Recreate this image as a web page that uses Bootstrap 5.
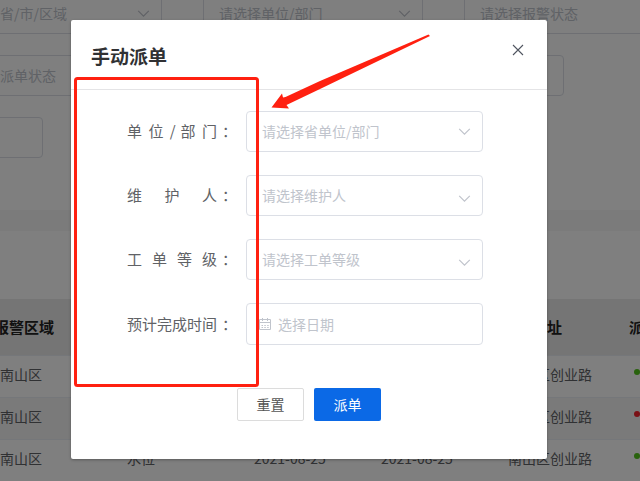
<!DOCTYPE html>
<html lang="zh-CN">
<head>
<meta charset="utf-8">
<meta name="viewport" content="width=device-width, initial-scale=1">
<title>手动派单</title>
<link href="https://cdn.jsdelivr.net/npm/bootstrap@5.3.0/dist/css/bootstrap.min.css" rel="stylesheet">
<style>
  body { font-family: "Noto Sans CJK SC", sans-serif; font-size: 14px; color: #606266; background: #f7f7f7; }
  .page { height: 100vh; }
  .scrolled { margin-left: -58px; margin-right: -60px; }
  .filters { padding-bottom: 52px; row-gap: 21px; margin-top: -7px; }
  .filter-row { column-gap: 41px; }
  .field { width: 220px; flex: none; height: 41px; border: 1px solid #dcdfe6; border-radius: 4px; font-size: 14px; padding: 0 15px; }
  .field-end { margin-left: 141px; }
  .field-short { width: 101px; }
  select.field { padding-right: 34px; color: #c0c4cc; background-color: #fff; background-size: 13px 13px; background-position: right 11px center;
    background-image: url("data:image/svg+xml,%3Csvg xmlns='http://www.w3.org/2000/svg' viewBox='0 0 13 13'%3E%3Cpath d='M1.2 3.8 6.5 9.2 11.8 3.8' fill='none' stroke='%23c0c4cc' stroke-width='1.2'/%3E%3C/svg%3E"); }
  select.field.low { background-position: right 11px top 16px; }
  .field::placeholder, .date-input::placeholder { color: #c0c4cc; opacity: 1; }
  .results { margin-top: 21px; padding-top: 68px; }
  .results table { table-layout: fixed; width: 820px; }
  .results th, .results td { padding: 0 0 3px; border-bottom: 1px solid #ebeef5; white-space: nowrap; color: #606266; vertical-align: middle; }
  .results th { height: 56px; padding-bottom: 0; font-size: 15px; background: #ebebeb; color: #222; }
  .results th span { margin-left: -6px; }
  .results td { height: 42px; background: #fff; }
  .results tr.alt td { background: #f5f5f5; }
  .lead-col { width: 58px; }
  .dot { width: 6px; height: 6px; border-radius: 50%; display: inline-block; vertical-align: 5px; margin-left: -1px; }
  .dot-green { background: #52c41a; }
  .dot-red { background: #f5222d; }
  .veil { background: rgba(0, 0, 0, .5); padding-top: 20px; }
  .dispatch { width: 476px; max-width: 100%; margin-right: 22px; border-radius: 2px; box-shadow: 0 1px 3px rgba(0, 0, 0, .3); padding-bottom: 38px; }
  .dispatch header { height: 70px; padding: 4px 20px 0; border-bottom: 1px solid #e4e4e6; }
  .dispatch h1 { font-size: 19px; color: #303133; }
  .close-btn { margin: 0 3px 18px 0; line-height: 1; }
  .entries { padding: 21px 64px 0 56px; row-gap: 23px; }
  .caption { width: 90px; flex: none; font-size: 15px; text-align: justify; text-align-last: justify; }
  .colon { width: 29px; flex: none; font-size: 15px; padding-left: 5px; }
  .entries .field { flex: 1 1 0; min-width: 0; }
  .entries .date-field { height: 42px; padding: 0 11px; gap: 6px; }
  .date-input { min-width: 0; outline: 0; }
  .actions { padding-top: 43px; gap: 10px; }
  .actions .btn { width: 67px; height: 33px; padding: 0; font-size: 14px; border-radius: 2px; }
  .btn-reset { border: 1px solid #dcdcdc; color: #555; }
  .btn-send { background: #0b69e6; color: #fff; }
  .marks { pointer-events: none; }
</style>
<script src="https://cdn.jsdelivr.net/npm/bootstrap@5.3.0/dist/js/bootstrap.bundle.min.js"></script>
</head>
<body>
<div class="page position-relative overflow-hidden">
  <main class="scrolled" aria-hidden="true">
    <section class="filters bg-white d-flex flex-column">
      <div class="filter-row d-flex">
        <select class="form-select field" aria-label="区域"><option>请选择省/市/区域</option></select>
        <select class="form-select field" aria-label="单位"><option>请选择单位/部门</option></select>
        <select class="form-select field" aria-label="报警状态"><option>请选择报警状态</option></select>
      </div>
      <div class="filter-row d-flex">
        <select class="form-select field" aria-label="派单状态"><option>请选择派单状态</option></select>
        <input class="field field-end" type="text" aria-label="时间">
      </div>
      <div class="filter-row d-flex">
        <input class="field field-short" type="text" aria-label="关键字">
      </div>
    </section>
    <section class="results bg-white">
      <table>
        <thead>
          <tr><th class="lead-col"></th><th><span>报警区域</span></th><th><span>报警类型</span></th><th><span>报警时间</span></th><th><span>更新时间</span></th><th><span>详细地址</span></th><th><span>派单状态</span></th></tr>
        </thead>
        <tbody>
          <tr><td></td><td>南山区</td><td>水位</td><td>2021-08-25</td><td>2021-08-25</td><td>南山区创业路</td><td><i class="dot dot-green"></i></td></tr>
          <tr class="alt"><td></td><td>南山区</td><td>水位</td><td>2021-08-25</td><td>2021-08-25</td><td>南山区创业路</td><td><i class="dot dot-red"></i></td></tr>
          <tr><td></td><td>南山区</td><td>水位</td><td>2021-08-25</td><td>2021-08-25</td><td>南山区创业路</td><td><i class="dot dot-green"></i></td></tr>
        </tbody>
      </table>
    </section>
  </main>

  <div class="veil position-absolute top-0 start-0 w-100 h-100 d-flex justify-content-center align-items-start">
    <form class="dispatch bg-white position-relative" role="dialog" aria-labelledby="dlg-title">
      <header class="d-flex align-items-center justify-content-between">
        <h1 id="dlg-title" class="fw-bold m-0">手动派单</h1>
        <button type="button" class="close-btn btn border-0 p-0" aria-label="关闭">
          <svg width="12" height="12" viewBox="0 0 12 12"><path d="M1 1 11 11M11 1 1 11" stroke="#505560" stroke-width="1.1"/></svg>
        </button>
      </header>
      <div class="entries d-flex flex-column">
        <div class="d-flex align-items-center">
          <label class="caption" for="unit">单 位 / 部 门</label><span class="colon">：</span>
          <select id="unit" class="form-select field"><option>请选择省单位/部门</option></select>
        </div>
        <div class="d-flex align-items-center">
          <label class="caption" for="keeper">维 护 人</label><span class="colon">：</span>
          <select id="keeper" class="form-select field low"><option>请选择维护人</option></select>
        </div>
        <div class="d-flex align-items-center">
          <label class="caption" for="level">工 单 等 级</label><span class="colon">：</span>
          <select id="level" class="form-select field low"><option>请选择工单等级</option></select>
        </div>
        <div class="d-flex align-items-center">
          <label class="caption" for="due">预计完成时间</label><span class="colon">：</span>
          <div class="field date-field d-flex align-items-center">
            <svg class="flex-shrink-0" width="14" height="14" viewBox="0 0 14 14" fill="none" stroke="#c0c4cc"><path d="M1.5 2.5h11v10h-11zM1.500 5.500h11M4.500 1v3M9.500 1v3M3.500 8.500h1.500M6.300 8.500h1.500M9.200 8.500h1.500M3.500 10.500h1.500M6.300 10.500h1.500M9.200 10.500h1.500"/></svg>
            <input id="due" class="date-input border-0 p-0 flex-fill" type="text" placeholder="选择日期">
          </div>
        </div>
      </div>
      <div class="actions d-flex justify-content-center">
        <button type="reset" class="btn btn-reset">重置</button>
        <button type="button" class="btn btn-send">派单</button>
      </div>
      <svg class="marks position-absolute top-0 start-0" width="476" height="439" viewBox="71 20 476 439" aria-hidden="true">
        <rect x="75.5" y="78.5" width="182" height="307" rx="2" fill="none" stroke="#ff2010" stroke-width="3"/>
        <path d="M271.500 107.500 282 93.500 283 97.500 285.500 97 320 81 428.500 34.500 430 36 320 89 286.500 105 289 108.500Z" fill="#ff2010"/>
      </svg>
    </form>
  </div>
</div>
</body>
</html>
